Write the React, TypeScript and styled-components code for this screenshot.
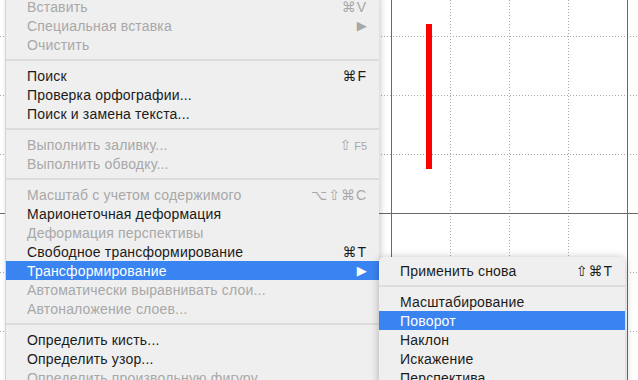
import styled, { createGlobalStyle } from 'styled-components';

const GlobalStyle = createGlobalStyle`
  html, body {
    margin: 0;
    padding: 0;
    background: #ffffff;
    overflow: hidden;
  }
  body {
    font-family: "Liberation Sans", "DejaVu Sans", sans-serif;
  }
`;

interface itemType {
  label?: string;
  shortcut?: string;
  small?: string;
  disabled?: boolean;
  active?: boolean;
  arrow?: boolean;
  separator?: boolean;
}

const mainItems: itemType[] = [
  { label: 'Вставить', shortcut: '⌘V', disabled: true },
  { label: 'Специальная вставка', arrow: true, disabled: true },
  { label: 'Очистить', disabled: true },
  { separator: true },
  { label: 'Поиск', shortcut: '⌘F' },
  { label: 'Проверка орфографии...' },
  { label: 'Поиск и замена текста...' },
  { separator: true },
  { label: 'Выполнить заливку...', shortcut: '⇧', small: 'F5', disabled: true },
  { label: 'Выполнить обводку...', disabled: true },
  { separator: true },
  { label: 'Масштаб с учетом содержимого', shortcut: '⌥⇧⌘C', disabled: true },
  { label: 'Марионеточная деформация' },
  { label: 'Деформация перспективы', disabled: true },
  { label: 'Свободное трансформирование', shortcut: '⌘T' },
  { label: 'Трансформирование', arrow: true, active: true },
  { label: 'Автоматически выравнивать слои...', disabled: true },
  { label: 'Автоналожение слоев...', disabled: true },
  { separator: true },
  { label: 'Определить кисть...' },
  { label: 'Определить узор...' },
  { label: 'Определить произвольную фигуру...', disabled: true },
];

const subItems: itemType[] = [
  { label: 'Применить снова', shortcut: '⇧⌘T' },
  { separator: true },
  { label: 'Масштабирование' },
  { label: 'Поворот', active: true },
  { label: 'Наклон' },
  { label: 'Искажение' },
  { label: 'Перспектива' },
  { label: 'Деформация' },
];

// canvas guides
const dotted = [36, 95, 154, 272, 331];
const dottedX = [450, 509, 568];

const Grid = () => (
  <GridSvg width="638" height="380" viewBox="0 0 638 380">
    {dotted.map((y) => (
      <line key={'h' + y} x1="0" x2="638" y1={y + 0.5} y2={y + 0.5} stroke="#a8a8a8" strokeDasharray="1 2" />
    ))}
    {dottedX.map((x) => (
      <line key={'v' + x} x1={x + 0.5} x2={x + 0.5} y1="0" y2="380" stroke="#a8a8a8" strokeDasharray="1 2" />
    ))}
    <line x1="0" x2="638" y1="213.5" y2="213.5" stroke="#6a6a6a" />
    <line x1="391.5" x2="391.5" y1="0" y2="380" stroke="#6a6a6a" />
    <line x1="627.5" x2="627.5" y1="0" y2="380" stroke="#6a6a6a" />
    <rect x="426" y="24" width="6" height="145" fill="#ff0000" />
  </GridSvg>
);

const MenuList = ({ items }: { items: itemType[] }) => (
  <>
    {items.map((item, i) =>
      item.separator ? (
        <Separator key={i} />
      ) : (
        <Row key={i} $disabled={item.disabled} $active={item.active}>
          <Label>{item.label}</Label>
          {item.shortcut && (
            <Shortcut>
              {item.shortcut}
              {item.small && <Small>{item.small}</Small>}
            </Shortcut>
          )}
          {item.arrow && <Arrow>▶</Arrow>}
        </Row>
      )
    )}
  </>
);

const App = () => {
  return (
    <Canvas>
      <GlobalStyle />
      <Grid />
      <MainMenu>
        <MenuList items={mainItems} />
      </MainMenu>
      <SubMenu>
        <MenuList items={subItems} />
      </SubMenu>
    </Canvas>
  );
};

export default App;

const Canvas = styled.div`
  position: relative;
  width: 638px;
  height: 380px;
  overflow: hidden;
  background: #ffffff;
`;

const GridSvg = styled.svg`
  display: block;
`;

const MainMenu = styled.div`
  position: absolute;
  left: 5px;
  top: -3px;
  width: 374px;
  background: #efefef;
  border-left: 1px solid #d2d2d2;
  box-sizing: border-box;
  box-shadow: 2px 0 6px rgba(0, 0, 0, 0.18);
`;

const SubMenu = styled.div`
  position: absolute;
  left: 379px;
  top: 257px;
  width: 246px;
  padding-top: 4px;
  background: #efefef;
  border-radius: 5px 5px 0 0;
  box-shadow: 0 1px 8px rgba(0, 0, 0, 0.28);
`;

const Row = styled.div<{ $disabled?: boolean; $active?: boolean }>`
  display: flex;
  align-items: center;
  height: 19px;
  padding: 0 12px 0 21px;
  font-size: 14px;
  letter-spacing: 0.18px;
  white-space: nowrap;
  color: ${(p) => (p.$active ? '#ffffff' : p.$disabled ? '#a8a8a8' : '#1b1b1b')};
  background: ${(p) => (p.$active ? '#3a84f1' : 'transparent')};
`;

const Label = styled.span`
  flex: 1;
`;

const Shortcut = styled.span`
  letter-spacing: 1px;
`;

const Small = styled.span`
  font-size: 11px;
  letter-spacing: 0;
  margin-left: 2px;
`;

const Arrow = styled.span`
  font-size: 13px;
  margin-right: 0;
`;

const Separator = styled.div`
  height: 2px;
  margin: 5px 0;
  background: #dcdcdc;
`;
